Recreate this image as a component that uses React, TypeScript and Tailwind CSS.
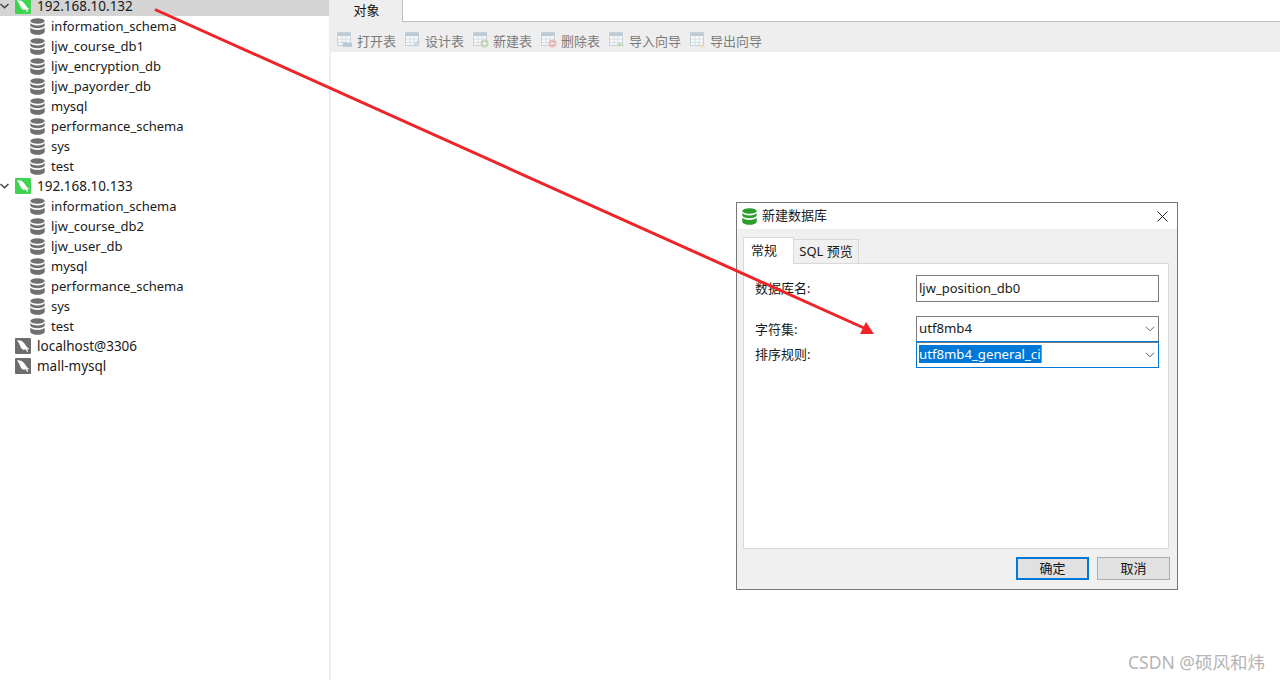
const FONT = "font-['Noto_Sans','Noto_Sans_CJK_SC',sans-serif]";

function Dolphin({ active }: { active: boolean }) {
  return (
    <svg width="16" height="16" viewBox="0 0 16 16" className="shrink-0">
      <rect width="16" height="16" rx="1" fill={active ? '#3fd34f' : '#6d6d6d'} />
      <path
        d="M2 2.500C4.500 2 7 3 8.500 4.500c1.500 1.500 2.200 3 3.200 4.300.7.900 1.600 1.700 2.800 2.200-.8.300-1.500.3-2.200.1l.7 3.200c-1.100-.6-1.900-1.700-2.400-3-.9.300-1.700.6-2.700.2C6.600 11 5.800 9.800 5.400 8.600 4.800 6.800 3.600 4.500 2 2.500z"
        fill="#ffffff"
      />
    </svg>
  );
}

function DbIcon({ color = '#707070', size = 15 }: { color?: string; size?: number }) {
  return (
    <svg width={size} height={size + 2} viewBox="0 0 15 17" className="shrink-0">
      <ellipse cx="7.500" cy="3" rx="7.200" ry="2.800" fill={color} />
      <path d="M.3 5c1 1.700 3.800 2.400 7.200 2.400S13.700 6.700 14.700 5v2.500c-.7 1.900-3.600 2.700-7.200 2.700S1 9.400.3 7.500z" fill={color} />
      <path d="M.3 9.600c1 1.700 3.800 2.400 7.200 2.400s6.200-.7 7.200-2.400V14c-.7 1.900-3.600 2.800-7.200 2.800S1 15.900.3 14z" fill={color} />
    </svg>
  );
}

function Server({ name, active, open, selected }: { name: string; active: boolean; open?: boolean; selected?: boolean }) {
  return (
    <div className={`flex h-5 items-center ${selected ? 'bg-[#d4d4d4]' : ''}`}>
      <div className="flex w-[15px] justify-start">
        {open && (
          <svg width="9" height="6" viewBox="0 0 9 6">
            <path d="M.5 1l4 3.800L8.500 1" fill="none" stroke="#444" strokeWidth="1.500" />
          </svg>
        )}
      </div>
      <Dolphin active={active} />
      <span className="ml-[6px] text-[13.500px] leading-[12px] text-[#1a1a1a]">{name}</span>
    </div>
  );
}

function DbRow({ name }: { name: string }) {
  return (
    <div className="flex h-5 items-center pl-[30px]">
      <DbIcon />
      <span className="ml-[6px] pt-[2px] text-[13px] text-[#1a1a1a]">{name}</span>
    </div>
  );
}

type ToolKind = 'open' | 'design' | 'new' | 'delete' | 'import' | 'export';

const TOOLS: { kind: ToolKind; label: string; width: string }[] = [
  { kind: 'open', label: '打开表', width: 'w-[68px]' },
  { kind: 'design', label: '设计表', width: 'w-[68px]' },
  { kind: 'new', label: '新建表', width: 'w-[68px]' },
  { kind: 'delete', label: '删除表', width: 'w-[68px]' },
  { kind: 'import', label: '导入向导', width: 'w-[81px]' },
  { kind: 'export', label: '导出向导', width: 'w-[81px]' },
];

function ToolIcon({ kind }: { kind: ToolKind }) {
  return (
    <svg width="16" height="16" viewBox="0 0 16 16" className="shrink-0">
      <rect x=".5" y=".5" width="13" height="13" fill="#f6f8fa" stroke="#c5d0d9" />
      <rect x="1" y="1" width="12" height="3" fill="#bccad5" />
      <path d="M1 7h12M1 10.500h12M5 4v9M9 4v9" stroke="#d8e0e6" />
      {kind === 'open' && <path d="M6 10h3l1 1h5v4H6z" fill="#bccad5" />}
      {kind === 'design' && <path d="M8 15l1-3 4-4 2 2-4 4z" fill="#ccd3d8" />}
      {kind === 'new' && (
        <>
          <circle cx="11.500" cy="11.500" r="4" fill="#bfd8b3" />
          <path d="M9.500 11.500h4M11.500 9.500v4" stroke="#fff" />
        </>
      )}
      {kind === 'delete' && (
        <>
          <circle cx="11.500" cy="11.500" r="4" fill="#e6bcb6" />
          <path d="M9.500 11.500h4" stroke="#fff" />
        </>
      )}
      {kind === 'import' && <path d="M15 15c-.5-2.500-2-3.500-4-3.500V10l-3 2.500 3 2.500v-1.500c1.500 0 3 .5 4 1.500z" fill="#bfd8b3" />}
      {kind === 'export' && <path d="M8 10c.5 2.500 2 3 4 3v-1.500l3 2.500-3 2v-1.500c-2 0-4-1.500-4-4.500z" fill="#ecdcbc" />}
    </svg>
  );
}

function Select({ value, focused }: { value: React.ReactNode; focused?: boolean }) {
  return (
    <div
      className={`flex h-[27px] w-[243px] items-center border pl-[2px] pr-[4px] text-[13.200px] text-[#1a1a1a] ${
        focused ? 'border-[#0078d7]' : 'border-[#7a7a7a]'
      }`}
    >
      <div className="flex-1">{value}</div>
      <svg width="10" height="6" viewBox="0 0 10 6" className="mr-[-1px]">
        <path d="M1 .8l4 4 4-4" fill="none" stroke="#606060" />
      </svg>
    </div>
  );
}

export default function App() {
  const group1 = ['information_schema', 'ljw_course_db1', 'ljw_encryption_db', 'ljw_payorder_db', 'mysql', 'performance_schema', 'sys', 'test'];
  const group2 = ['information_schema', 'ljw_course_db2', 'ljw_user_db', 'mysql', 'performance_schema', 'sys', 'test'];

  return (
    <div className={`relative flex h-[680px] w-[1280px] overflow-hidden bg-white ${FONT}`}>
      <aside className="h-full w-[331px] shrink-0 overflow-hidden border-r-2 border-[#eeeeee]">
        <div className="-mt-1">
          <Server name="192.168.10.132" active open selected />
          {group1.map((n) => (
            <DbRow key={n} name={n} />
          ))}
          <Server name="192.168.10.133" active open />
          {group2.map((n) => (
            <DbRow key={n} name={n} />
          ))}
          <Server name="localhost@3306" active={false} />
          <Server name="mall-mysql" active={false} />
        </div>
      </aside>

      <main className="flex-1">
        <div className="flex h-[22px] border-b border-[#bdbdbd]">
          <div className="flex h-[22px] w-[72px] items-start justify-center border-r border-[#bdbdbd] bg-[#eeeeee] text-[13px] leading-[20px] text-[#111]">
            对象
          </div>
        </div>
        <div className="flex h-[30px] items-end bg-[#eeeeee] pb-[2px] pl-[6px]">
          {TOOLS.map((t) => (
            <div key={t.kind} className={`flex h-5 items-center gap-[4px] ${t.width}`}>
              <ToolIcon kind={t.kind} />
              <span className="whitespace-nowrap pt-[3px] text-[13px] text-[#7b7b7b]">{t.label}</span>
            </div>
          ))}
        </div>
      </main>

      {/* dialog window */}
      <div className="absolute left-[736px] top-[202px] flex h-[388px] w-[442px] flex-col border border-[#767676] bg-[#f0f0f0]">
        <div className="flex h-[26px] items-center bg-white pl-[5px] pr-[9px]">
          <DbIcon color="#2a9d2a" />
          <span className="ml-[5px] flex-1 text-[13px] text-[#1a1a1a]">新建数据库</span>
          <svg width="11" height="11" viewBox="0 0 11 11">
            <path d="M.5.5l10 10M10.500.5l-10 10" stroke="#222" />
          </svg>
        </div>

        <div className="mx-[6px] mt-[7px] flex h-[27px] items-end">
          <div className="z-10 -mb-px flex h-[27px] w-[51px] items-start justify-start border border-b-0 border-[#d9d9d9] bg-white pl-[7px] text-[13px] leading-[24px] text-[#1a1a1a]">
            常规
          </div>
          <div className="flex h-[24px] w-[65px] items-center justify-center border border-b-0 border-l-0 border-[#d9d9d9] bg-[#f0f0f0] text-[13px] text-[#1a1a1a]">
            SQL 预览
          </div>
        </div>

        <div className="mx-[6px] flex h-[286px] w-[426px] flex-col border border-[#d9d9d9] bg-white pl-[11px] pr-[9px] pt-[11px] text-[13px] text-[#1a1a1a]">
          <div className="flex h-[27px] items-center">
            <span className="w-[161px]">数据库名:</span>
            <div className="flex h-[27px] w-[243px] items-center border border-[#7a7a7a] pl-[2px] text-[13px]">ljw_position_db0</div>
          </div>
          <div className="mt-[14px] flex h-[26px] items-center">
            <span className="w-[161px] pt-[2px]">字符集:</span>
            <Select value="utf8mb4" />
          </div>
          <div className="-mt-px flex h-[27px] items-center">
            <span className="w-[161px]">排序规则:</span>
            <Select
              focused
              value={<span className="border-r border-[#e8801a] bg-[#0078d7] text-white">utf8mb4_general_ci</span>}
            />
          </div>
        </div>

        <div className="mr-[7px] mt-[8px] flex justify-end gap-2 text-[13px] text-[#111]">
          <button type="button" className="h-[23px] w-[73px] border-2 border-[#0078d7] bg-[#e1e1e1] leading-none">
            确定
          </button>
          <button type="button" className="h-[23px] w-[73px] border border-[#adadad] bg-[#e1e1e1] leading-none">
            取消
          </button>
        </div>
      </div>

      {/* annotation arrow drawn over the screenshot */}
      <svg className="pointer-events-none absolute left-0 top-0" width="1280" height="680" viewBox="0 0 1280 680">
        <path d="M155 9.500L864 328" stroke="#ee2428" strokeWidth="3" fill="none" />
        <path d="M874 334L860 334L866 322z" fill="#ee2428" />
      </svg>

      <span className="absolute right-[15px] top-[651px] text-[17.500px] leading-[22px] text-[#b5b5b5]">CSDN @硕风和炜</span>
    </div>
  );
}
